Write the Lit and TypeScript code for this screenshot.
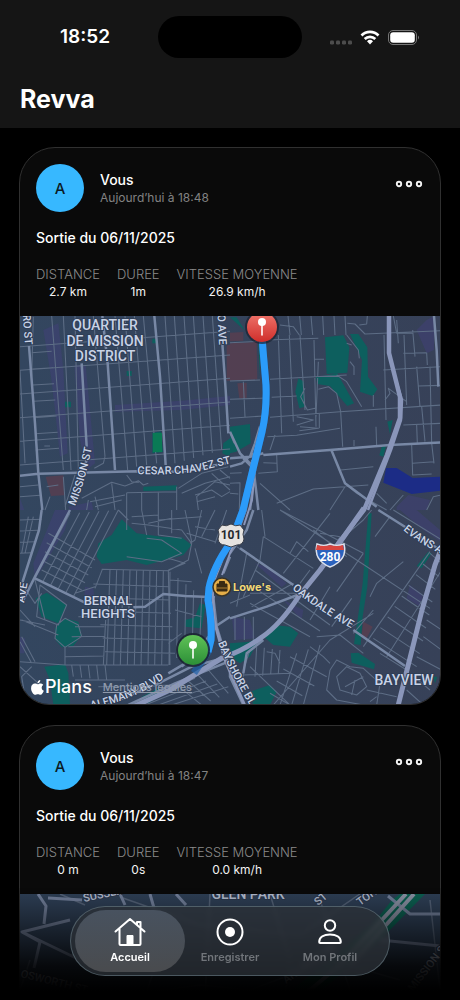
import { LitElement, html, css, svg } from "lit";
import { customElement, property } from "lit/decorators.js";

type Line = [number, number, number, number];

/** n evenly spaced streets between the first and the last one. */
const fan = (a: Line, b: Line, n: number): string =>
  Array.from({ length: n }, (_, i) => {
    const t = n === 1 ? 0 : i / (n - 1);
    const p = a.map((v, k) => Math.round(v + (b[k] - v) * t));
    return `M${p[0]} ${p[1]}L${p[2]} ${p[3]}`;
  }).join("");

interface Tile {
  x: number;
  y: number;
  parks: string;
  shops?: string;
  care?: string;
  water?: string;
  minor: string;
  major: string;
}

/* Each tile is drawn on its own grid of three units to the pixel. */
const TILES: Tile[] = [
  {
    x: 15,
    y: 310,
    parks:
      "M412 368 438 364 444 426 412 430ZM385 530 485 526 485 541 385 543ZM150 275 168 275 168 292 150 292ZM335 183 350 183 350 198 335 198ZM412 86 424 86 424 100 412 100ZM645 385 625 400 622 430 645 442Z",
    shops:
      "M85 60 130 40 145 180 158 430 135 440 120 300 108 200ZM178 165 212 165 240 460 215 480 195 390ZM300 285 500 272 645 258 645 285 500 300 300 305ZM15 565 28 600 15 600ZM160 590 230 575 235 600 165 600Z",
    care: "M92 500 145 496 147 556 108 558ZM635 105 645 105 645 212 635 212Z",
    minor:
      fan([15, 110, 645, 64], [15, 465, 645, 417], 6) +
      fan([50, 128, 110, 124], [62, 420, 132, 415], 7) +
      fan([110, 18, 145, 480], [180, 18, 190, 480], 3) +
      fan([235, 18, 270, 440], [300, 18, 338, 480], 2) +
      fan([330, 18, 365, 470], [385, 18, 425, 460], 3) +
      fan([450, 18, 480, 460], [592, 18, 620, 420], 6) +
      "M15 180 30 460M50 200 55 20M88 408 105 408M270 440 265 460 238 475" +
      "M15 530 70 525M15 560 75 556M105 560 90 600M145 500 152 600M180 495 150 590M95 530 130 525M200 565 290 517 330 528 370 512 385 525 400 520M225 575 330 555M240 590 320 570M335 548 335 600M335 548 485 545M380 548 380 600M430 545 430 600M485 530 485 600M490 535 560 490 640 470M500 550 570 520 645 500M540 555 590 540 620 560 645 545M545 575 600 560M550 600 545 560 600 515 645 525M590 490 645 540M615 480 645 505M220 570 215 600M240 560 250 600M290 520 300 600M335 495 350 515 372 517",
    major:
      "M42 108 60 340 70 490 82 600M15 497 70 491 365 484M365 484 500 485 640 458M200 160 215 410M215 450 170 580M262 18 278 160 300 480M418 18 435 200 452 465M622 100 632 240 640 370",
  },
  {
    x: 230,
    y: 310,
    parks:
      "M285 82 340 76 358 112 352 188 290 192ZM360 72 385 72 412 112 414 200 442 238 428 258 390 245 396 150ZM258 202 322 190 372 280 352 288 300 228 262 222ZM205 205 222 215 224 290 208 295 196 245ZM0 350 60 342 62 400 18 425 0 430ZM472 335 488 330 480 372ZM455 410 468 408 460 440 448 436ZM85 100 92 100 90 200ZM0 22 20 22 45 62Z",
    shops:
      "M560 60 590 30 612 18 612 120 590 130ZM500 590 535 555 600 570 590 600 500 600Z",
    care: "M0 100 80 96 82 208 0 212ZM0 68 40 66 40 92 0 94ZM22 220 50 218 50 264 28 266Z",
    water: "M468 474 500 474 548 504 630 500 630 542 545 552 460 518Z",
    minor:
      fan([110, 30, 130, 20], [110, 90, 265, 85], 2) +
      fan([145, 75, 155, 370], [210, 75, 225, 300], 3) +
      fan([174, 18, 180, 75], [312, 18, 315, 75], 5) +
      "M0 98 85 94M0 213 90 210M120 208 350 195M0 268 110 264M125 262 200 258M0 325 100 318M120 322 330 305 635 285M40 215 45 320M150 45 190 50 208 75M252 90 258 350M252 148 282 148M265 155 258 320M352 40 375 42 405 72 635 62M345 18 348 75M388 45 410 42 412 18M350 75 385 120 388 145M360 155 372 170 372 195M350 100 365 105M320 195 350 215 395 290M265 238 295 230 320 250 332 305 338 410M225 235 212 260 232 300 255 295M200 320 250 330 200 345M210 350 265 355 208 362M112 380 200 376 330 355M268 310 268 355M135 375 120 420M430 255 430 290M372 390 372 408M438 350 440 408M500 30 505 100M520 130 590 128M522 75 530 285M548 60 555 140M590 128 592 165M460 180 635 170M560 170 570 290M600 170 605 400M565 228 635 226M520 345 635 340M560 345 562 400M575 290 585 395M605 400 612 460M612 455 548 460M545 405 548 495 605 492M462 75 468 330M465 270 480 250 475 235 530 275M85 490 142 485 140 435M142 460 100 458M90 520 180 600M140 580 250 537 415 525M300 600 345 530M332 480 430 470M350 525 380 550 470 600M440 550 470 580M480 600 520 555M0 490 35 488M0 520 30 518 28 600M0 550 25 552M590 600 610 560 635 555M0 370 12 400M490 18 500 70 550 70",
    major:
      "M100 435 300 420 480 405 635 397M305 422 345 520 440 590M0 365 30 430 70 470 85 600M0 445 60 440 100 430M60 440 75 400 90 350M40 445 75 480 60 600M0 470 35 460 70 430M612 18 620 120 625 230",
  },
  {
    x: 15,
    y: 510,
    parks:
      "M320 28 365 70 440 80 500 82 530 105 505 135 450 150 395 165 335 150 260 162 245 140 250 100 290 75ZM62 265 95 248 155 285 130 340 80 320ZM120 355 150 325 190 335 200 375 175 408 140 412 122 390ZM88 470 150 463 160 490 165 585 115 585 105 510ZM555 280 572 285 560 355 510 350 510 330 540 322ZM380 560 430 535 430 560 400 580Z",
    shops: "M120 0 165 0 150 60 60 210 55 160ZM15 380 30 385 28 430 15 430ZM210 230 235 235 238 265 208 255Z",
    minor:
      fan([15, 30, 80, 28], [15, 130, 50, 128], 4) +
      fan([40, 20, 20, 130], [55, 20, 30, 130], 2) +
      fan([165, 10, 60, 205], [310, 0, 175, 260], 6) +
      fan([60, 210, 90, 330], [15, 300, 60, 350], 2) +
      fan([100, 70, 240, 150], [80, 180, 200, 240], 5) +
      fan([262, 178, 240, 235], [460, 180, 465, 465], 2) +
      fan([285, 178, 275, 465], [445, 182, 440, 465], 9) +
      fan([465, 185, 462, 465], [560, 260, 555, 380], 5) +
      fan([20, 330, 130, 375], [20, 380, 60, 455], 2) +
      fan([190, 320, 268, 320], [150, 440, 268, 438], 5) +
      fan([235, 222, 460, 230], [270, 425, 480, 430], 6) +
      fan([170, 465, 175, 500], [270, 465, 275, 510], 5) +
      fan([250, 530, 480, 525], [180, 510, 330, 510], 2) +
      fan([350, 585, 540, 505], [470, 585, 640, 530], 4) +
      fan([480, 520, 560, 585], [580, 480, 640, 550], 4) +
      "M260 178 460 182 520 150 530 100 500 60 400 45 350 40M15 455 150 465 460 465M265 465 272 330 M150 465 150 412M335 0 335 60M380 0 395 75M430 0 430 75 500 85M470 0 470 70M510 0 530 95M560 0 540 90 525 100M600 0 560 80M635 0 600 100M350 20 430 15M400 40 470 25M430 30 560 20M540 50 600 60M515 70 600 95M15 330 90 345M50 470 20 500 30 560 60 585M15 470 70 520M20 220 60 280 80 250M75 225 155 285 130 345 65 320ZM150 325 190 345 200 380 150 412 120 385 125 345ZM465 210 530 215M540 115 560 190M335 140 440 155 500 130 440 90 395 85M180 250 240 230M15 395 50 460M460 145 510 160 460 180M480 300 560 320M460 400 500 370M310 0 340 30",
    major:
      "M80 0 72 60 15 240M165 0 60 200 25 270M60 205 210 278M355 292 390 290 445 252 510 258 600 262M460 490 545 440 580 380M300 575 430 520 530 470 640 440M340 585 480 520 640 455M595 262 605 350 645 480M645 320 600 350 570 410 500 470M645 140 625 190",
  },
  {
    x: 230,
    y: 510,
    parks:
      "M415 10 425 10 412 230 398 320 392 405 372 402 384 320 398 220ZM362 430 385 428 435 462 432 478 365 458ZM95 375 130 345 180 350 205 370 180 410 130 405ZM0 400 60 395 90 380 60 440 30 460 0 440ZM60 545 120 525 140 545 120 585 70 585ZM595 125 605 130 575 175 560 168ZM610 500 622 500 615 520Z",
    shops: "M510 0 560 0 630 60 632 95 580 60ZM5 320 60 330 75 385 15 390ZM75 160 110 170 170 220 155 232ZM540 225 580 255 570 290 530 265ZM160 270 220 300 215 330Z",
    care: "M400 335 428 350 410 385 395 375Z",
    minor:
      fan([600, 130, 635, 160], [430, 385, 560, 470], 9) +
      fan([600, 125, 400, 410], [635, 180, 470, 440], 2) +
      fan([75, 180, 300, 345], [60, 280, 240, 380], 3) +
      fan([300, 10, 160, 190], [400, 130, 320, 245], 3) +
      fan([240, 330, 300, 230], [370, 370, 430, 300], 3) +
      fan([100, 80, 250, 175], [150, 0, 400, 130], 2) +
      fan([80, 410, 75, 500], [150, 420, 145, 490], 4) +
      fan([15, 320, 15, 390], [70, 320, 70, 390], 3) +
      fan([150, 585, 200, 430], [220, 585, 270, 405], 3) +
      fan([120, 550, 180, 585], [180, 440, 290, 500], 4) +
      "M150 0 380 150 600 295M40 495 180 490M110 425 135 430 150 460M180 585 60 470M40 500 40 480 60 420M300 480 320 450 360 470 400 475 450 520 440 585M300 480 290 540 320 570 400 585M320 500 350 470 390 490 410 530 380 555 330 540ZM345 530 400 500M375 510 365 555M435 80 480 20M490 0 635 90M100 80 90 150 40 260M20 110 50 130 20 290M60 250 200 250M65 290 190 220M180 130 200 95 235 125M270 70 330 80 290 150M420 260 440 220 520 155M240 410 280 440 300 460M130 585 300 390 430 310M260 380 330 375 400 430M240 180 210 220M250 60 350 140M95 0 105 80M0 280 60 255M425 0 400 30 330 90M540 490 600 540M530 540 580 585M450 430 530 480M560 440 635 480M580 380 635 420M590 330 635 360M410 540 500 560M420 575 440 560",
    major:
      "M445 0 540 60 630 120M30 115 190 225M370 360 525 468M70 0 50 60 0 130M0 325 110 290 210 252M40 585 0 500 0 470M40 490 50 430 100 390",
  },
];

@customElement("ride-map")
export class RideMap extends LitElement {
  @property() area = "bernal";

  static styles = css`
    :host {
      display: block;
      position: relative;
    }
    .canvas {
      display: block;
      width: 100%;
      height: auto;
    }
    .halo {
      fill: #c9d3e6;
      stroke: #2f3e56;
      stroke-width: 2px;
      stroke-linejoin: round;
      paint-order: stroke;
      font-family: Roboto, "Liberation Sans", sans-serif;
    }
    .district {
      font-size: 14px;
      font-weight: 500;
      text-anchor: middle;
    }
    .small {
      font-size: 13px;
    }
    .street {
      font-size: 11px;
      font-weight: 500;
    }
    .place {
      font: 700 11px Inter, sans-serif;
      fill: #f3d873;
      stroke: #2b3951;
      stroke-width: 2px;
      paint-order: stroke;
    }
    .shield {
      font: 700 12px Roboto, sans-serif;
      text-anchor: middle;
    }
    .credits {
      position: absolute;
      left: 11px;
      bottom: 7px;
      display: flex;
      align-items: center;
      gap: 11px;
      font-family: Inter, sans-serif;
    }
    .brand {
      display: flex;
      align-items: center;
      gap: 1px;
      font-size: 18px;
      line-height: 20px;
      font-weight: 500;
      color: #fff;
    }
    .legal {
      font-size: 11px;
      line-height: 16px;
      font-weight: 500;
      color: #8f9aac;
    }
  `;

  private roads() {
    return TILES.map(
      (t) => svg`<g transform=${`translate(${t.x} ${t.y}) scale(.33333)`}>
        <path d=${t.shops ?? ""} fill="#41407a" opacity=".5" />
        <path d=${t.care ?? ""} fill="#573e50" opacity=".85" />
        <path d=${t.parks} fill="#0d5f5e" />
        <path d=${t.water ?? ""} fill="#1c2c86" />
        <path d=${t.minor} fill="none" stroke="#5d6d85" stroke-width="3.2" stroke-linejoin="round" />
      </g>`,
    ).concat(
      TILES.map(
        (t) => svg`<g transform=${`translate(${t.x} ${t.y}) scale(.33333)`}>
          <path d=${t.major} fill="none" stroke="#7888a5" stroke-width="7.5" stroke-linejoin="round" />
        </g>`,
      ),
    );
  }

  private bernal() {
    return svg`
      <defs>
        <linearGradient id="ground" x1="0" y1="0" x2="1" y2="0">
          <stop offset="0" stop-color="#33465f" />
          <stop offset="1" stop-color="#374158" />
        </linearGradient>
        <linearGradient id="red" x1="0" y1="0" x2="0" y2="1">
          <stop offset="0" stop-color="#f0776d" /><stop offset="1" stop-color="#cf2e2b" />
        </linearGradient>
        <linearGradient id="green" x1="0" y1="0" x2="0" y2="1">
          <stop offset="0" stop-color="#5fc257" /><stop offset="1" stop-color="#2c8f37" />
        </linearGradient>
        <path id="cesar" d="M137 474Q190 476 212 468L240 461" />
        <path id="mission" d="M75 506Q85 482 92 447" />
        <path id="oakdale" d="M292 589Q320 612 358 632" />
        <path id="alemany" d="M91 709Q135 700 168 676" />
        <path id="bayshore" d="M218 643Q230 672 250 706" />
        <path id="evans" d="M403 530Q422 546 450 558" />
      </defs>
      <rect x="20" y="316" width="421" height="390" fill="url(#ground)" />
      ${this.roads()}
      <rect x="153" y="433" width="9" height="19" fill="#0a7a55" />
      <g fill="none" stroke="#8a96ba" stroke-linejoin="round">
        <path d="M389 316V353L400 397V418L387 455 364 510 337 545" stroke-width="4.5" />
        <path d="M393 370 402 400 401 420 391 450 368 510" stroke-width="2.5" />
        <path d="M364 508 338 545 320 570 299 596Q280 625 262 637Q245 650 222 658L170 690 135 706" stroke-width="5" />
        <path d="M440 552 435 565 422 610 398 706" stroke-width="5" />
        <path d="M252 460 246 510 238 532 222 575M256 455 252 500 244 525" stroke-width="2" />
        <path d="M222 560 212 585 214 620 225 660 245 706" stroke-width="3" />
      </g>
      <path d="M262 336 263 350 266 385Q267 410 262 432L243 510 231 542Q213 567 209 588L208 600Q212 622 211 640L208 652 194 673" fill="none" stroke="#1f5fa8" stroke-width="7" stroke-linejoin="round" opacity=".7" />
      <path d="M262 336 263 350 266 385Q267 410 262 432L243 510 231 542Q213 567 209 588L208 600Q212 622 211 640L208 652" fill="none" stroke="#2b9bfa" stroke-width="7" stroke-linejoin="round" />

      <text class="halo district" x="105" y="330">QUARTIER</text>
      <text class="halo district" x="105" y="346">DE MISSION</text>
      <text class="halo district" x="105" y="361">DISTRICT</text>
      <text class="halo district small" x="108" y="605">BERNAL</text>
      <text class="halo district small" x="108" y="618">HEIGHTS</text>
      <text class="halo district" x="404" y="685">BAYVIEW</text>
      <text class="halo street"><textPath href="#cesar">CESAR CHAVEZ ST</textPath></text>
      <text class="halo street"><textPath href="#mission">MISSION ST</textPath></text>
      <text class="halo street"><textPath href="#oakdale">OAKDALE AVE</textPath></text>
      <text class="halo street"><textPath href="#alemany">ALEMANY BLVD</textPath></text>
      <text class="halo street"><textPath href="#bayshore">BAYSHORE BLVD</textPath></text>
      <text class="halo street"><textPath href="#evans">EVANS AVE</textPath></text>
      <text class="halo street" transform="translate(25 345) rotate(86)" text-anchor="end">GUERRERO ST</text>
      <text class="halo street" transform="translate(219 345) rotate(87)" text-anchor="end">POTRERO AVE</text>
      <text class="halo street" transform="translate(24 603) rotate(-80)">AVE</text>

      <path d="M222 525Q226 527 231 524Q236 527 240 525L244 530Q242 534 244 539Q243 545 237 545L231 547 225 545Q219 545 218 539Q220 534 218 530Z" fill="#e6e3e0" stroke="#3b3f49" stroke-width="1" />
      <text class="shield" x="231" y="539" fill="#25272d">101</text>
      <path d="M317 544Q324 547 330 544Q337 547 344 544Q348 560 330 567Q313 560 317 544Z" fill="#2b62bd" stroke="#dbe0ec" stroke-width="1.5" />
      <path d="M317 545Q324 547 330 545Q337 547 343 545L344 550H316Z" fill="#d8453f" />
      <text class="shield" x="330" y="561" fill="#fff">280</text>
      <circle cx="222" cy="587" r="9" fill="#e5ae48" stroke="#3a3427" stroke-width="1.5" />
      <path d="M217 584h10v7h-10ZM219.500 584v-2.500h5v2.500" fill="#3a2b12" stroke="#3a2b12" stroke-width="1" />
      <path d="M217 588h10" stroke="#c8933a" stroke-width=".8" />
      <text class="place" x="233" y="591">Lowe's</text>

      <g>
        <circle cx="262" cy="327" r="17" fill="#1a2230" opacity=".7" />
        <circle cx="262" cy="327" r="15" fill="url(#red)" />
        <circle cx="262" cy="322" r="4" fill="#fff" />
        <path d="M262 325V335" stroke="#fff" stroke-width="1.6" stroke-linecap="round" />
        <circle cx="193" cy="650" r="17" fill="#1a2230" opacity=".85" />
        <circle cx="193" cy="650" r="15" fill="url(#green)" />
        <circle cx="193" cy="645" r="4" fill="#fff" />
        <path d="M193 648V658" stroke="#fff" stroke-width="1.6" stroke-linecap="round" />
      </g>`;
  }

  private glenPark() {
    return svg`
      <rect x="20" y="894" width="421" height="390" fill="#33465f" />
      <path d="M372 925 392 900 400 894H425L385 935 300 1010 280 1000Z" fill="#0d6a5a" />
      <g fill="none" stroke="#5d6d85" stroke-width="1.5">
        <path d="M60 894 85 905M120 897 200 925 300 935 360 894M150 894 165 940 140 1010M30 960 20 990M210 894 205 1000M270 894 290 960 280 1030M320 900 350 990M400 980 330 960 250 990M430 900 440 990M20 1010 200 985 440 1010" />
      </g>
      <g fill="none" stroke="#7e8dab" stroke-width="3" stroke-linejoin="round">
        <path d="M38 894 46 906 44 924M48 898 82 900M120 894 125 905M150 894 154 908M176 894 186 905M70 920 22 932 80 960M22 932 40 942 34 968" />
        <path d="M388 896 410 914H441M380 940 441 946" />
        <path d="M406 894 340 965 250 1040M414 894 350 965" stroke="#9aa1b6" stroke-width="4" />
      </g>
      <text class="halo district" x="248" y="899">GLEN PARK</text>
      <text class="halo street" transform="translate(84 902) rotate(-12)">SUSSEX ST</text>
      <text class="halo street" transform="translate(318 906) rotate(-40)">ST</text>
      <text class="halo street" transform="translate(360 906) rotate(-36)">TON ST</text>
      <text class="halo street" transform="translate(20 977) rotate(14)">OSWORTH ST</text>
      <text class="halo street" transform="translate(286 984) rotate(-35)">ARLINGTON</text>
      <text class="halo street" transform="translate(413 992) rotate(-52)">MISSION ST</text>`;
  }

  render() {
    const home = this.area === "bernal";
    return html`
      <svg class="canvas" viewBox=${home ? "20 316 420 388" : "20 894 420 388"} role="img" aria-label="Carte du trajet">
        ${home ? this.bernal() : this.glenPark()}
      </svg>
      <div class="credits">
        <span class="brand">
          <svg width="13" height="15" viewBox="0 0 12 14" fill="#fff" aria-hidden="true">
            <path d="M8.600 0C8.700 1.500 7.500 3 6 3C5.900 1.500 7.200.200 8.600 0ZM6.200 3.900C6.700 3.900 7.600 3.200 8.800 3.200C9.800 3.200 10.800 3.700 11.400 4.600C9.200 5.900 9.500 9 11.900 10C11.400 11.400 10.200 13.800 8.800 13.800C7.900 13.800 7.500 13.200 6.300 13.200C5.200 13.200 4.700 13.800 3.900 13.800C2.300 13.800 0 10.600 0 7.600C0 4.800 1.800 3.300 3.500 3.300C4.700 3.300 5.600 3.900 6.200 3.900Z" />
          </svg>
          <span>Plans</span>
        </span>
        <a class="legal" href="#mentions">Mentions légales</a>
      </div>
    `;
  }
}

interface Stat {
  label: string;
  value: string;
}

@customElement("ride-card")
export class RideCard extends LitElement {
  @property() when = "";
  @property() area = "bernal";
  @property({ attribute: false }) stats: Stat[] = [];

  static styles = css`
    :host {
      display: block;
    }
    .card {
      border: 1px solid #303030;
      border-radius: 36px 36px 30px 30px;
      background: #0a0a0a;
      overflow: hidden;
    }
    .body {
      padding: 16px;
    }
    .head {
      display: flex;
      align-items: center;
      gap: 16px;
    }
    .avatar {
      width: 48px;
      height: 48px;
      border-radius: 50%;
      background: #37b8ff;
      color: #0b1a24;
      display: grid;
      place-items: center;
      font-size: 15px;
      font-weight: 500;
    }
    .who {
      flex: 1;
    }
    .name {
      font-size: 14px;
      line-height: 20px;
      font-weight: 500;
      color: #fff;
    }
    .when {
      font-size: 12px;
      line-height: 16px;
      color: #828282;
    }
    .more {
      align-self: flex-start;
      padding: 12px 0;
      margin: 0 1px;
      border: 0;
      background: none;
      line-height: 0;
    }
    .title {
      margin: 16px 0;
      font-size: 14px;
      line-height: 20px;
      font-weight: 500;
      color: #fff;
    }
    .stats {
      display: flex;
      gap: 17px;
      margin: 0;
    }
    .stat {
      text-align: center;
    }
    .label {
      font-size: 13px;
      line-height: 20px;
      font-weight: 300;
      color: #8a8a8a;
    }
    .value {
      margin: 0;
      font-size: 12px;
      line-height: 16px;
      color: #f2f2f2;
    }
  `;

  render() {
    return html`
      <article class="card">
        <div class="body">
          <header class="head">
            <span class="avatar">A</span>
            <div class="who">
              <div class="name">Vous</div>
              <div class="when">${this.when}</div>
            </div>
            <button class="more" aria-label="Plus d’options">
              <svg width="28" height="16" viewBox="0 0 28 16" fill="none" stroke="#f2f2f2" stroke-width="1.900">
                <circle cx="4" cy="8" r="2.200" />
                <circle cx="14" cy="8" r="2.200" />
                <circle cx="24" cy="8" r="2.200" />
              </svg>
            </button>
          </header>
          <h2 class="title">Sortie du 06/11/2025</h2>
          <dl class="stats">
            ${this.stats.map(
              (s) => html`<div class="stat">
                <dt class="label">${s.label}</dt>
                <dd class="value">${s.value}</dd>
              </div>`,
            )}
          </dl>
        </div>
        <ride-map .area=${this.area}></ride-map>
      </article>
    `;
  }
}

const stats = (distance: string, time: string, speed: string): Stat[] => [
  { label: "DISTANCE", value: distance },
  { label: "DUREE", value: time },
  { label: "VITESSE MOYENNE", value: speed },
];

@customElement("app-root")
export class AppRoot extends LitElement {
  static styles = css`
    :host {
      display: flex;
      flex-direction: column;
      height: 100vh;
      position: relative;
      overflow: hidden;
      background: #000;
      color: #fff;
      font-family: Inter, "Open Sans", sans-serif;
    }
    .top {
      background: #151515;
      padding-top: 16px;
    }
    .status {
      display: grid;
      grid-template-columns: 1fr 144px 1fr;
      align-items: center;
      justify-items: center;
      padding: 0 12px;
    }
    .time {
      font-size: 19px;
      line-height: 24px;
      font-weight: 600;
    }
    .island {
      width: 100%;
      height: 42px;
      border-radius: 21px;
      background: #000;
    }
    .brand {
      margin: 0;
      padding: 24px 20px 12px;
      font-size: 25px;
      line-height: 34px;
      font-weight: 700;
    }
    .feed {
      flex: 1;
      min-height: 0;
      overflow-y: auto;
      scrollbar-width: none;
      display: flex;
      flex-direction: column;
      gap: 20px;
      padding: 19px;
    }
    .shade {
      position: absolute;
      inset: auto 0 0 0;
      height: 112px;
      background: linear-gradient(rgba(0, 0, 0, 0.1), rgba(0, 0, 0, 0.55) 40%, rgba(0, 0, 0, 0.88) 70%, #000 92%);
      pointer-events: none;
    }
    .tabs {
      position: absolute;
      bottom: 24px;
      left: 70px;
      right: 70px;
      box-sizing: border-box;
      height: 70px;
      padding: 3px 9px;
      display: grid;
      grid-template-columns: repeat(3, 1fr);
      border: 1px solid rgba(140, 165, 175, 0.4);
      border-radius: 35px;
      background: rgba(43, 48, 55, 0.76);
      backdrop-filter: blur(2px);
    }
    .tab {
      display: flex;
      flex-direction: column;
      align-items: center;
      justify-content: center;
      gap: 2px;
      margin: 0 -5px;
      padding: 0;
      border: 0;
      border-radius: 31px;
      background: none;
      font: 600 11px/16px Inter, sans-serif;
      color: #71757a;
    }
    .on {
      background: linear-gradient(#48525f, #494b4e);
      color: #fff;
    }
  `;

  render() {
    return html`
      <div class="top">
        <div class="status">
          <span class="time">18:52</span>
          <span class="island"></span>
          <svg width="90" height="20" viewBox="330 27 90 20" aria-hidden="true">
            <g fill="#4c4c4c">
              <rect x="330" y="40.500" width="4" height="4" rx="1.200" />
              <rect x="336" y="40.500" width="4" height="4" rx="1.200" />
              <rect x="342" y="40.500" width="4" height="4" rx="1.200" />
              <rect x="348" y="40.500" width="4" height="4" rx="1.200" />
            </g>
            <g fill="none" stroke="#fff" stroke-width="2.700">
              <path d="M361.500 35.500A12 12 0 0 1 378.500 35.500" />
              <path d="M364.700 39A7.500 7.500 0 0 1 375.300 39" />
            </g>
            <path d="M367 41.300A4.300 4.300 0 0 1 373 41.300L370 44.500Z" fill="#fff" />
            <rect x="388.500" y="30.500" width="28" height="14" rx="4.500" fill="none" stroke="#767676" />
            <rect x="390.200" y="32.200" width="24.600" height="10.600" rx="3" fill="#fff" />
            <path d="M418 35.500Q420 37.500 418 39.500Z" fill="#767676" />
          </svg>
        </div>
        <h1 class="brand">Revva</h1>
      </div>

      <main class="feed">
        <ride-card when="Aujourd’hui à 18:48" .stats=${stats("2.7 km", "1m", "26.9 km/h")}></ride-card>
        <ride-card when="Aujourd’hui à 18:47" area="glen" .stats=${stats("0 m", "0s", "0.0 km/h")}></ride-card>
      </main>

      <div class="shade"></div>
      <nav class="tabs">
        <button class="tab on" aria-current="page">
          <svg width="32" height="30" viewBox="0 0 32 30" fill="none" stroke="#fff" stroke-width="2" stroke-linejoin="round" stroke-linecap="round">
            <path d="M1.500 14.500 16 2 30.500 14.500M5.500 11.500V27Q5.500 28 6.500 28H25.500Q26.500 28 26.500 27V11.500M23 7.500V5H26.500V10.500" />
            <path d="M13 27.500V18.500H19V27.500Z" fill="#fff" stroke-width="1" />
          </svg>
          Accueil
        </button>
        <button class="tab">
          <svg width="32" height="30" viewBox="0 0 32 30" fill="none" stroke="#fff" stroke-width="2">
            <circle cx="16" cy="15" r="12.500" />
            <circle cx="16" cy="15" r="5" fill="#fff" stroke="none" />
          </svg>
          Enregistrer
        </button>
        <button class="tab">
          <svg width="32" height="30" viewBox="0 0 32 30" fill="none" stroke="#fff" stroke-width="2" stroke-linejoin="round">
            <circle cx="16" cy="8.500" r="5.200" />
            <path d="M5.200 25C5.200 20 10 17.500 16 17.500S26.800 20 26.800 25Q26.800 26 25.800 26H6.200Q5.200 26 5.200 25Z" />
          </svg>
          Mon Profil
        </button>
      </nav>
    `;
  }
}
